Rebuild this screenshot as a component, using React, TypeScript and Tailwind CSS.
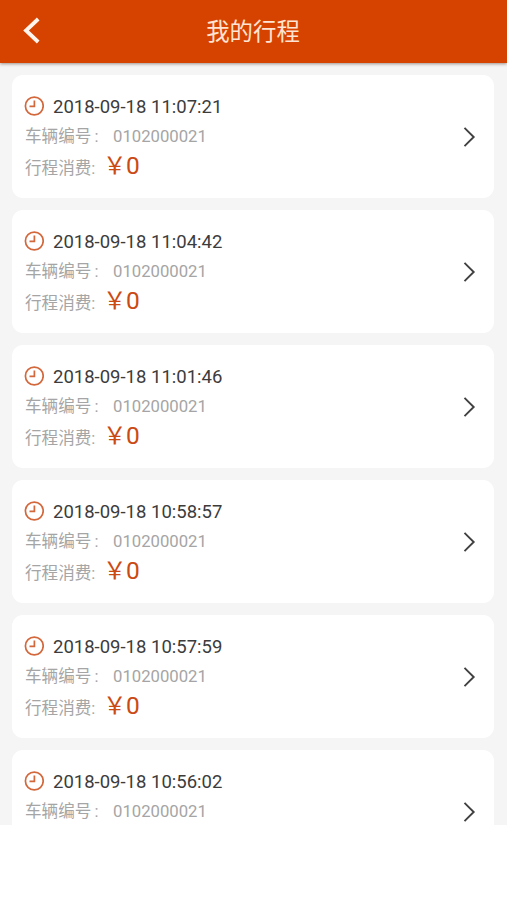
const trips = [
  { time: '2018-09-18 11:07:21', cost: '0' },
  { time: '2018-09-18 11:04:42', cost: '0' },
  { time: '2018-09-18 11:01:46', cost: '0' },
  { time: '2018-09-18 10:58:57', cost: '0' },
  { time: '2018-09-18 10:57:59', cost: '0' },
  { time: '2018-09-18 10:56:02' },
];

function ClockIcon() {
  return (
    <svg className="mb-[3px] size-5 shrink-0" viewBox="0 0 20 20" fill="none" stroke="#d2683c" strokeWidth="1.7">
      <circle cx="10.3" cy="10" r="8.9" />
      <path d="M10.4 4.6V10.3H5.5" />
    </svg>
  );
}

function TripCard({ time, cost }: { time: string; cost?: string }) {
  return (
    <li className="flex h-[123px] shrink-0 items-start justify-between rounded-[11px] bg-white pl-[12px] pr-[18px]">
      <div className="pt-[20.5px]">
        <div className="flex h-6 items-center gap-[9px] text-[18.5px] text-[#3c3c3c]">
          <ClockIcon />
          <span className="pt-px">{time}</span>
        </div>
        <div className="mt-[5px] flex h-6 items-center text-[16.7px] text-[#a5a5a5]">
          <span className="w-[89px] pl-px pt-[2px] text-[16.6px]">车辆编号<span className="pl-[3px]">:</span></span>
          <span>0102000021</span>
        </div>
        {cost !== undefined && (
          <div className="mt-[6px] flex h-6 items-center text-[16.6px] text-[#a5a5a5]">
            <span className="w-[79px] pl-px pt-[6px]">行程消费:</span>
            <span className="flex items-center pb-px text-[#cb4a14]">
              <span className="text-[23.5px] leading-6">￥</span>
              <span className="-ml-[0.5px] text-[24.5px] leading-6">{cost}</span>
            </span>
          </div>
        )}
      </div>
      <svg className="mt-[51px] h-[22px] w-[13px]" viewBox="0 0 13 22" fill="none" stroke="#404040" strokeWidth="1.9">
        <path d="M1.5 1.8L10.7 11L1.5 20.2" />
      </svg>
    </li>
  );
}

export default function App() {
  return (
    <div className="h-[900px] w-[507px] overflow-hidden bg-white font-[Roboto,'Noto_Sans_CJK_SC',sans-serif]">
      <header className="relative grid h-[63px] grid-cols-[1fr_auto_1fr] items-center bg-[#d64300] text-white shadow-[0_1px_3px_rgba(90,60,50,0.55)]">
        <svg className="ml-[23px] mt-[-2px] h-[27px] w-[18px]" viewBox="0 0 18 27" fill="none" stroke="#fff5ec" strokeWidth="3.8">
          <path d="M15.2 2L3 13.5L15.2 25" />
        </svg>
        <h1 className="mr-px pt-[2px] text-[23.4px] font-normal text-[#ffe4d3]">我的行程</h1>
      </header>
      <main className="h-[762px] overflow-hidden bg-[#f5f5f5] pl-[12px] pr-[13px] pt-[11.6px]">
        <ul className="flex flex-col gap-[12.15px]">
          {trips.map((trip) => (
            <TripCard key={trip.time} time={trip.time} cost={trip.cost} />
          ))}
        </ul>
      </main>
    </div>
  );
}
